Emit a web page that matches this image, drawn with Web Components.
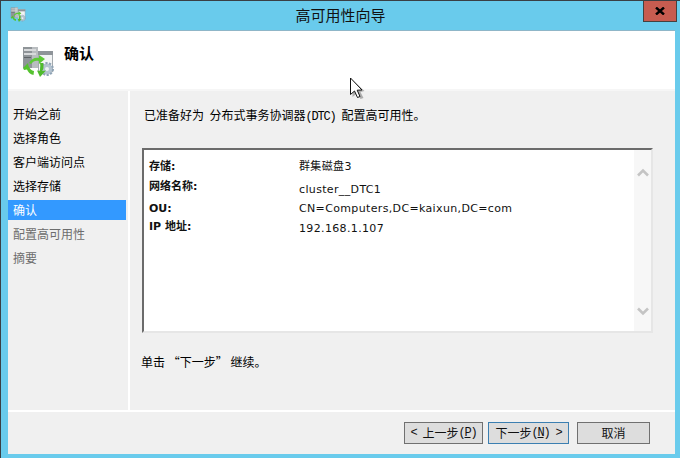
<!DOCTYPE html>
<html lang="zh">
<head>
<meta charset="utf-8">
<title>高可用性向导</title>
<style>
  html, body { margin: 0; padding: 0; }
  body { width: 680px; height: 458px; overflow: hidden; font: 12px "DejaVu Sans", "Noto Sans CJK SC", sans-serif; }
  .m { font-family: "Liberation Mono", monospace; font-size: 12px; letter-spacing: -1.2px; }
</style>
</head>
<body>
<wizard-window>
  <title-bar slot="title">高可用性向导</title-bar>
  <wizard-header slot="header">确认</wizard-header>
  <step-list slot="nav">
    <step-item>开始之前</step-item>
    <step-item>选择角色</step-item>
    <step-item>客户端访问点</step-item>
    <step-item>选择存储</step-item>
    <step-item state="active">确认</step-item>
    <step-item state="off">配置高可用性</step-item>
    <step-item state="off">摘要</step-item>
  </step-list>
  <confirm-page slot="main">
    <span slot="lead">已准备好为  分布式事务协调器<span class="m">(DTC) </span>配置高可用性。</span>
    <summary-box slot="box">
      <summary-row label="存储:" h="20">群集磁盘3</summary-row>
      <summary-row label="网络名称:" h="22" shift="3">cluster__DTC1</summary-row>
      <summary-row label="OU:" h="18">CN=Computers,DC=kaixun,DC=com</summary-row>
      <summary-row label="IP 地址:" h="20" shift="2">192.168.1.107</summary-row>
    </summary-box>
    <span slot="hint">单击 “下一步” 继续。</span>
  </confirm-page>
  <button-bar slot="footer">
    <wiz-button w="79"><span class="m">&lt; </span>上一步<span class="m">(<u>P</u>)</span></wiz-button>
    <wiz-button w="81" kind="default">下一步<span class="m">(<u>N</u>) &gt;</span></wiz-button>
    <wiz-button w="73" gap="3">取消</wiz-button>
  </button-bar>
</wizard-window>

<script>
const CJK = '"Noto Sans CJK SC", sans-serif';

// server + green arrows + gear, used big in the header and small in the title bar
const WIZ_ICON = `
  <svg viewBox="0 0 32 31" width="100%" height="100%">
    <rect x="1" y="1" width="15" height="21" fill="#8f9498"/>
    <rect x="10" y="1" width="6" height="21" fill="#b9bdc0"/>
    <rect x="2" y="3" width="12" height="2" fill="#d8dadc"/>
    <rect x="2" y="7" width="12" height="2" fill="#d8dadc"/>
    <rect x="2" y="11" width="7" height="1" fill="#5f6468"/>
    <rect x="16.5" y="5.5" width="14" height="20" fill="#f2f4f5" stroke="#a4aaae" stroke-width="1"/>
    <rect x="16" y="5" width="15" height="4" fill="#8e9499"/>
    <circle cx="25" cy="23" r="5.5" fill="#b4c3d0"/>
    <circle cx="25" cy="23" r="6" fill="none" stroke="#8ea2b4" stroke-width="2" stroke-dasharray="2.2 1.5"/>
    <circle cx="25" cy="23" r="2" fill="#eef2f5"/>
    <path d="M7 17 C9 13 13 11 17 12 L17 9 L23 13 L17 18 L17 15 C14 14 11 15 9 18 Z" fill="#5cc936"/>
    <path d="M1 22 L6 17 L6.5 20 C8 23 9.5 24.5 12 25 L11.5 29 C8 28.5 6 26 5 23.5 L2 24 Z" fill="#55c22f"/>
    <path d="M21 17 C22 21 21.5 23.5 20 25 L24 24.5 L18 31 L15 24.5 L17.5 25 C18.5 23 18.5 20 18 17 Z" fill="#4fbb2c"/>
  </svg>`;

class WizardWindow extends HTMLElement {
  constructor() {
    super();
    this.attachShadow({ mode: 'open' });
    this.shadowRoot.innerHTML = `
      <style>
        :host { display: block; width: 680px; height: 458px; box-sizing: border-box; position: relative;
          background: #69cbec; border-top: 1px solid #3a3f44; border-left: 1px solid #3a3f44; }
        .frame { display: flex; flex-direction: column; height: 100%; }
        .client { flex: none; width: 667px; height: 423px; margin-left: 7px; display: flex; flex-direction: column;
          background: #f0f0f0; box-shadow: 0 -1px 0 #8fb6c8; }
        .middle { flex: none; height: 319px; display: flex; }
        .side { flex: none; width: 120px; border-right: 2px solid #fff; }
        .main { flex: 1; }
        .cursor { position: absolute; left: 348px; top: 76px; }
      </style>
      <div class="frame">
        <slot name="title"></slot>
        <div class="client">
          <slot name="header"></slot>
          <div class="middle">
            <div class="side"><slot name="nav"></slot></div>
            <div class="main"><slot name="main"></slot></div>
          </div>
          <slot name="footer"></slot>
        </div>
      </div>
      <svg class="cursor" width="16" height="22" viewBox="0 0 16 22">
        <path d="M2 2 L14 13 L10 14 L13 20 L10 21 L7 15 L2 19 Z" fill="#000" opacity=".28" transform="translate(1.5 1)"/>
        <path d="M1.5 1 L1.5 17.5 L5.5 14 L8.5 20.5 L11 19.5 L8.2 13.2 L13 13 Z" fill="#fff" stroke="#111" stroke-width="1"/>
      </svg>`;
  }
}

class TitleBar extends HTMLElement {
  constructor() {
    super();
    this.attachShadow({ mode: 'open' });
    this.shadowRoot.innerHTML = `
      <style>
        :host { display: block; flex: none; height: 30px; position: relative; }
        .bar { height: 30px; display: flex; align-items: center; padding-left: 9px; }
        .icon { flex: none; width: 16px; height: 15px; margin-top: -3px; }
        .text { position: absolute; left: 0; right: 0; top: 5px; text-align: center;
          font: 15px/18px ${CJK}; color: #111; }
        .close { position: absolute; left: 642px; top: 0; width: 32px; height: 20px; background: #c75c50;
          border: 1px solid #45413f; border-top: none; display: flex; align-items: center; justify-content: center; }
      </style>
      <div class="bar"><div class="icon">${WIZ_ICON}</div></div>
      <div class="text"><slot></slot></div>
      <div class="close">
        <svg width="10" height="8" viewBox="0 0 10 8"><path d="M1 0.5 L9 7.5 M9 0.5 L1 7.5" stroke="#000" stroke-width="2.4"/></svg>
      </div>`;
  }
}

class WizardHeader extends HTMLElement {
  constructor() {
    super();
    this.attachShadow({ mode: 'open' });
    this.shadowRoot.innerHTML = `
      <style>
        :host { display: block; flex: none; height: 60px; box-sizing: border-box; background: #fff;
          border-bottom: 2px solid #f6f6f6; }
        .row { display: flex; height: 58px; padding-left: 14px; }
        .icon { flex: none; width: 32px; height: 31px; margin-top: 15px; }
        .text { margin: 12px 0 0 10px; font: 700 15px/20px ${CJK}; color: #000; }
      </style>
      <div class="row"><div class="icon">${WIZ_ICON}</div><div class="text"><slot></slot></div></div>`;
  }
}

class StepList extends HTMLElement {
  constructor() {
    super();
    this.attachShadow({ mode: 'open' });
    this.shadowRoot.innerHTML = `
      <style>:host { display: flex; flex-direction: column; gap: 4px; padding: 13px 0 0; }</style>
      <slot></slot>`;
  }
}

class StepItem extends HTMLElement {
  constructor() {
    super();
    this.attachShadow({ mode: 'open' });
    this.shadowRoot.innerHTML = `
      <style>
        :host { display: block; height: 20px; padding-left: 5px; font: 12px/20px ${CJK}; color: #000; }
        :host([state="active"]) { background: #3399ff; color: #fff; margin-right: 2px; }
        :host([state="off"]) { color: #6d6d6d; }
      </style>
      <slot></slot>`;
  }
}

class ConfirmPage extends HTMLElement {
  constructor() {
    super();
    this.attachShadow({ mode: 'open' });
    this.shadowRoot.innerHTML = `
      <style>
        :host { display: block; color: #000; }
        .lead { padding: 14px 0 0 14px; height: 20px; font: 12px/20px ${CJK}; white-space: pre; }
        .box { margin: 23px 0 0 12px; }
        .hint { padding: 19px 0 0 11px; font: 12px/20px ${CJK}; }
      </style>
      <div class="lead"><slot name="lead"></slot></div>
      <div class="box"><slot name="box"></slot></div>
      <div class="hint"><slot name="hint"></slot></div>`;
  }
}

class SummaryBox extends HTMLElement {
  constructor() {
    super();
    this.attachShadow({ mode: 'open' });
    this.shadowRoot.innerHTML = `
      <style>
        :host { display: block; width: 511px; height: 185px; box-sizing: border-box; background: #fff;
          border: 2px solid #e6e6e6; border-top-color: #6b6b6b; border-left-color: #6b6b6b; }
        .wrap { display: flex; height: 100%; }
        .rows { flex: 1; padding: 8px 0 0 5px; }
        .scroll { flex: none; width: 17px; background: #f7f7f7; display: flex; flex-direction: column;
          justify-content: space-between; align-items: center; padding: 18px 0 15px; box-sizing: border-box; }
        svg { display: block; }
      </style>
      <div class="wrap">
        <div class="rows"><slot></slot></div>
        <div class="scroll">
          <svg width="12" height="9" viewBox="0 0 12 9"><path d="M1 7.5 L6 2.5 L11 7.5" fill="none" stroke="#c4c4c4" stroke-width="2.6"/></svg>
          <svg width="12" height="9" viewBox="0 0 12 9"><path d="M1 1.5 L6 6.5 L11 1.5" fill="none" stroke="#c4c4c4" stroke-width="2.6"/></svg>
        </div>
      </div>`;
  }
}

class SummaryRow extends HTMLElement {
  constructor() {
    super();
    this.attachShadow({ mode: 'open' });
    const h = this.getAttribute('h') || 20;
    const shift = this.getAttribute('shift') || 0;
    this.shadowRoot.innerHTML = `
      <style>
        :host { display: grid; grid-template-columns: 150px 1fr; height: ${h}px; line-height: 18px;
          font-size: 11px; font-family: "DejaVu Sans", ${CJK}; color: #111; }
        .label { font-weight: 700; }
        .value { padding-top: ${shift}px; letter-spacing: 0.35px; }
      </style>
      <div class="label">${this.getAttribute('label')}</div>
      <div class="value"><slot></slot></div>`;
  }
}

class ButtonBar extends HTMLElement {
  constructor() {
    super();
    this.attachShadow({ mode: 'open' });
    this.shadowRoot.innerHTML = `
      <style>
        :host { display: flex; flex: none; height: 44px; box-sizing: border-box; border-top: 2px solid #fff;
          padding: 10px 0 0 396px; gap: 5px; }
      </style>
      <slot></slot>`;
  }
}

class WizButton extends HTMLElement {
  constructor() {
    super();
    this.attachShadow({ mode: 'open' });
    const gap = this.getAttribute('gap') || 0;
    this.shadowRoot.innerHTML = `
      <style>
        :host { display: flex; align-items: center; justify-content: center; box-sizing: border-box;
          width: ${this.getAttribute('w')}px; height: 22px; margin-left: ${gap}px; background: #dddddd;
          border: 1px solid #707070; font: 12px/20px ${CJK}; color: #111; white-space: pre; }
        :host([kind="default"]) { border-color: #3c7fb1; }
      </style>
      <slot></slot>`;
  }
}

customElements.define('wizard-window', WizardWindow);
customElements.define('title-bar', TitleBar);
customElements.define('wizard-header', WizardHeader);
customElements.define('step-list', StepList);
customElements.define('step-item', StepItem);
customElements.define('confirm-page', ConfirmPage);
customElements.define('summary-box', SummaryBox);
customElements.define('summary-row', SummaryRow);
customElements.define('button-bar', ButtonBar);
customElements.define('wiz-button', WizButton);
</script>
</body>
</html>
